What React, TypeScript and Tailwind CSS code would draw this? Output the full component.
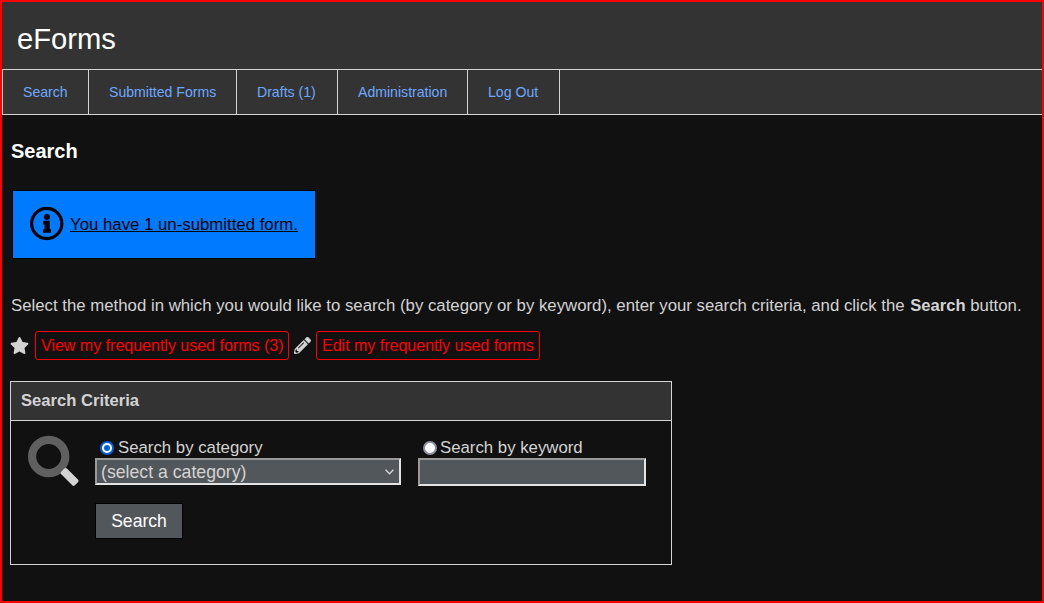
import React from 'react';

const navItems = [
  { label: 'Search', cls: 'w-[86px]' },
  { label: 'Submitted Forms', cls: 'w-[148px]' },
  { label: 'Drafts (1)', cls: 'w-[101px]' },
  { label: 'Administration', cls: 'w-[130px]' },
  { label: 'Log Out', cls: 'w-[92px]' },
];

function InfoIcon() {
  return (
    <svg viewBox="0 0 34 34" className="mb-[2px] h-[34px] w-[34px] shrink-0">
      <circle cx="16.7" cy="16.5" r="15.1" fill="none" stroke="#000" strokeWidth="3.2" />
      <circle cx="16.9" cy="10" r="3" />
      <path d="M13.1 13.8h6.6v8.3h1.2v3.6h-7.8v-3.6h1.4v-4.7h-1.4z" />
    </svg>
  );
}

function StarIcon() {
  return (
    <svg viewBox="0 0 576 512" className="mb-[1px] h-[17px] w-[19px] shrink-0" fill="#d3d3d3">
      <path d="M259.3 17.8L194 150.2 47.9 171.5c-26.2 3.8-36.7 36.1-17.7 54.6l105.7 103-25 145.5c-4.5 26.3 23.2 46 46.4 33.7L288 439.6l130.7 68.7c23.2 12.2 50.9-7.4 46.4-33.7l-25-145.5 105.7-103c19-18.5 8.5-50.8-17.7-54.6L382 150.2 316.7 17.8c-11.7-23.6-45.6-23.9-57.4 0z" />
    </svg>
  );
}

function PencilIcon() {
  return (
    <svg viewBox="0 0 512 512" className="mb-[1px] h-[17px] w-[17px] shrink-0" fill="#d3d3d3">
      <path d="M497.9 142.1l-46.1 46.1c-4.7 4.7-12.3 4.7-17 0l-111-111c-4.7-4.7-4.7-12.3 0-17l46.1-46.1c18.7-18.7 49.1-18.7 67.9 0l60.1 60.1c18.8 18.7 18.8 49.1 0 67.9zM284.2 99.8L21.6 362.4.4 483.9c-2.9 16.4 11.4 30.6 27.8 27.8l121.5-21.3 262.6-262.6c4.7-4.7 4.7-12.3 0-17l-111-111c-4.8-4.7-12.4-4.7-17.1 0zM124.1 339.9c-5.5-5.5-5.5-14.3 0-19.8l154-154c5.5-5.5 14.3-5.5 19.8 0s5.5 14.3 0 19.8l-154 154c-5.5 5.5-14.3 5.5-19.8 0zM88 424h48v36.3l-64.5 11.3-31.1-31.1L51.7 376H88v48z" />
    </svg>
  );
}

function MagnifierIcon() {
  return (
    <svg viewBox="0 0 52 52" className="h-[52px] w-[52px]">
      <circle cx="21.7" cy="21.5" r="16.6" fill="none" stroke="#606060" strokeWidth="8.2" />
      <rect x="33" y="37.9" width="19.2" height="8" rx="1.8" fill="#d3d3d3" transform="rotate(45 42.6 41.9)" />
    </svg>
  );
}

export default function App() {
  return (
    <div className="flex h-[603px] w-[1044px] flex-col overflow-hidden border-2 border-[#ff0000] bg-[#111111] font-['Liberation_Sans',Arial,sans-serif] text-[16.8px] leading-5 text-[#d3d3d3]">
      <header className="h-[67px] shrink-0 bg-[#333333] pl-[15px] pt-[17px] text-[29.2px] leading-10 text-white">
        eForms
      </header>
      <nav className="flex h-[46px] shrink-0 border-y border-l border-[#d3d3d3] bg-[#333333] text-[14.1px]">
        {navItems.map((item) => (
          <a key={item.label} href="#" className={`${item.cls} flex items-center whitespace-nowrap border-r border-[#d3d3d3] pl-5 text-[#6ea8fe]`}>
            {item.label}
          </a>
        ))}
      </nav>
      <main className="flex flex-col items-start pl-2">
        <h1 className="mt-[26px] pl-[1px] text-[20px] font-bold leading-5 text-white">Search</h1>
        <div className="ml-[2px] mt-[29px] flex h-[69px] w-[304px] items-center border border-black bg-[#007bff] pl-[17px] text-black">
          <InfoIcon />
          <a href="#" className="ml-[6px] whitespace-nowrap underline">You have 1 un-submitted form.</a>
        </div>
        <p className="mt-[37px] whitespace-nowrap pl-[1px]">
          Select the method in which you would like to search (by category or by keyword), enter your search criteria, and click the{' '}
          <b className="ml-[1px] text-[16.6px]">Search</b> button.
        </p>
        <div className="mt-[15px] flex h-[29px] items-center text-base leading-5">
          <StarIcon />
          <a href="#" className="ml-[6px] flex h-[29px] w-[254px] items-center whitespace-nowrap rounded-[3px] border border-[#ff0000] pl-[5px] text-[#ff0000]">
            View my frequently used forms (3)
          </a>
          <span className="ml-[5px] mr-[5px] flex"><PencilIcon /></span>
          <a href="#" className="flex h-[29px] w-[224px] items-center whitespace-nowrap rounded-[3px] border border-[#ff0000] pl-[5px] text-[#ff0000]">
            Edit my frequently used forms
          </a>
        </div>
        <section className="mt-[21px] h-[184px] w-[662px] border border-[#d3d3d3]">
          <h2 className="flex h-[39px] items-center border-b border-[#d3d3d3] bg-[#333333] pl-[10px] text-[16.6px] font-bold">Search Criteria</h2>
          <div className="flex">
            <div className="w-[84px] pl-4 pt-[14px]">
              <MagnifierIcon />
            </div>
            <div className="w-[323px] pt-[17px]">
              <label className="flex h-5 items-center pl-[5px]">
                <span className="mb-[1px] mr-[4px] flex h-[14px] w-[14px] items-center justify-center rounded-full bg-[#0060df]">
                  <span className="flex h-[10px] w-[10px] items-center justify-center rounded-full bg-white">
                    <span className="h-[6px] w-[6px] rounded-full bg-[#0060df]" />
                  </span>
                </span>
                Search by category
              </label>
              <div className="flex h-[27px] w-[306px] items-center justify-between border-2 border-b-[#e3e3e3] border-l-[#9a9a9a] border-r-[#e3e3e3] border-t-[#9a9a9a] bg-[#52575b] pl-1 pr-[5px] text-[17.7px]">
                <span>(select a category)</span>
                <svg viewBox="0 0 9 6" className="h-[6px] w-[9px]" fill="none" stroke="#d3d3d3" strokeWidth="1.4">
                  <path d="M0.6 0.7 4.5 4.7 8.4 0.7" />
                </svg>
              </div>
              <button className="mt-[18px] flex h-9 w-[88px] items-center justify-center border border-black bg-[#52575b] text-[17.6px] text-white">
                Search
              </button>
            </div>
            <div className="pt-[17px]">
              <label className="flex h-5 items-center pl-[5px]">
                <span className="mb-[1px] mr-[3px] h-[14px] w-[14px] rounded-full border-2 border-[#8f8f9d] bg-white" />
                Search by keyword
              </label>
              <input
                type="text"
                className="block h-7 w-[228px] border-2 border-b-[#e3e3e3] border-l-[#9a9a9a] border-r-[#e3e3e3] border-t-[#9a9a9a] bg-[#52575b] px-1 outline-none"
              />
            </div>
          </div>
        </section>
      </main>
    </div>
  );
}
